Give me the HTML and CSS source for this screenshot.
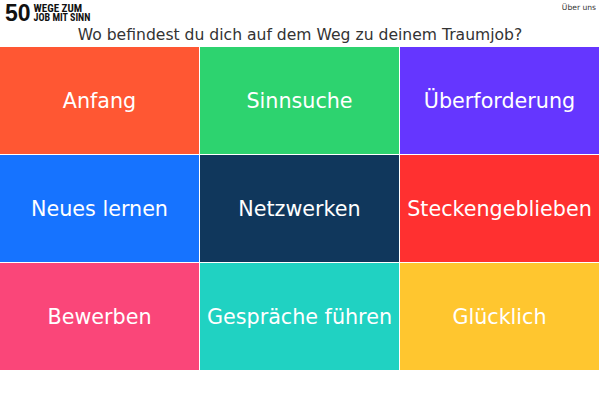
FILE: index.html
```html
<!DOCTYPE html>
<html>
  <head>
    <title>50 Wege zum Job mit Sinn</title>
    <link rel="stylesheet" href="styles.css">
  </head>
  <body>
    <div class="header">
      <div class="logo">
        <div class="logo-number">50</div>
        <div class="logo-text">
          <div class="logo-line1">WEGE ZUM</div>
          <div class="logo-line2">JOB MIT SINN</div>
        </div>
      </div>
      <div class="about">Über uns</div>
    </div>
    <div class="question">Wo befindest du dich auf dem Weg zu deinem Traumjob?</div>
    <div class="grid">
      <div class="tile orange">Anfang</div>
      <div class="tile green">Sinnsuche</div>
      <div class="tile purple">Überforderung</div>
      <div class="tile blue">Neues lernen</div>
      <div class="tile navy">Netzwerken</div>
      <div class="tile red">Steckengeblieben</div>
      <div class="tile pink">Bewerben</div>
      <div class="tile teal">Gespräche führen</div>
      <div class="tile yellow">Glücklich</div>
    </div>
  </body>
</html>
```

FILE: styles.css
```css
body {
  font-family: "DejaVu Sans", sans-serif;
  margin: 0;
  padding: 0;
  background-color: #fff;
  color: #333;
}
.header {
  display: flex;
  justify-content: space-between;
  align-items: flex-start;
  height: 24px;
}
.logo {
  display: flex;
  align-items: center;
  padding: 3px 0 0 5px;
  color: #111;
}
.logo-number {
  font-family: "Liberation Sans", sans-serif;
  font-size: 23px;
  font-weight: bold;
  line-height: 20px;
  margin-right: 3px;
}
.logo-text {
  font-family: "Roboto Condensed", "Liberation Sans", sans-serif;
  font-weight: bold;
  line-height: 9px;
}
.logo-line1 {
  font-size: 11px;
}
.logo-line2 {
  font-size: 10px;
}
.about {
  font-size: 7.6px;
  padding: 3px 4px 0 0;
}
.question {
  font-size: 15.6px;
  height: 23px;
  line-height: 22px;
  text-align: center;
}
.grid {
  display: grid;
  grid-template-columns: repeat(3, 199px);
  grid-auto-rows: 107px;
  gap: 1px;
}
.tile {
  display: flex;
  align-items: center;
  justify-content: center;
  color: #fff;
  font-size: 20.7px;
}
.orange { background-color: #ff5733; }
.green { background-color: #2dd36f; }
.purple { background-color: #6536ff; }
.blue { background-color: #1673ff; }
.navy { background-color: #10375c; }
.red { background-color: #ff3030; }
.pink { background-color: #fa4679; }
.teal { background-color: #20d2c2; }
.yellow { background-color: #ffc62f; }
```
